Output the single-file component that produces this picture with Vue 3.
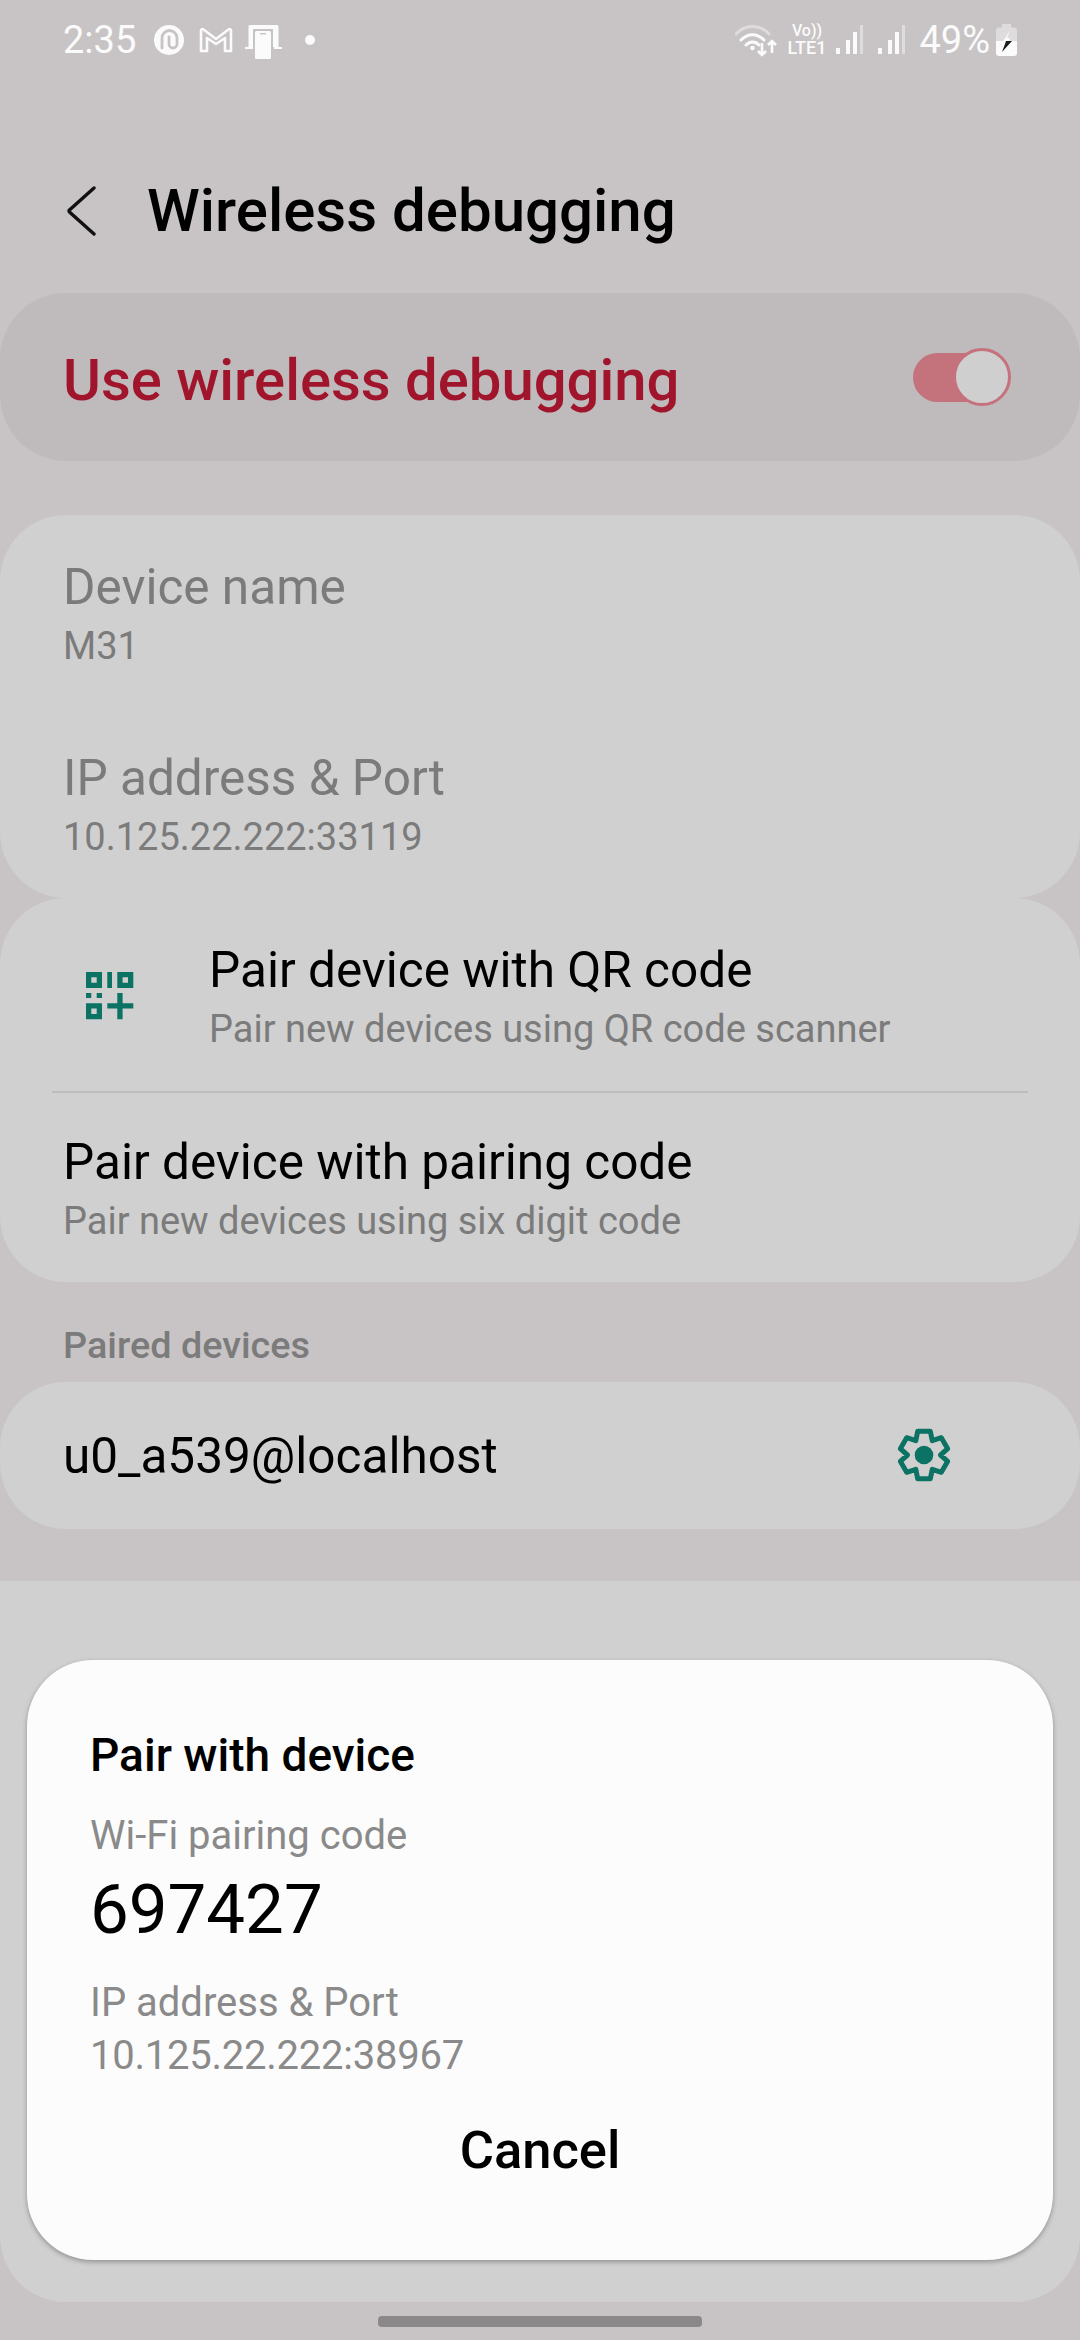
<script setup>
// gear outline, six teeth
const gearPath = () => {
  const cx = 30, cy = 30
  const pts = []
  for (let k = 0; k < 6; k++) {
    const a = (-90 + 60 * k) * Math.PI / 180
    const d = 15 * Math.PI / 180
    const v = 30 * Math.PI / 180
    pts.push([cx + 24.5 * Math.cos(a - d), cy + 24.5 * Math.sin(a - d)])
    pts.push([cx + 24.5 * Math.cos(a + d), cy + 24.5 * Math.sin(a + d)])
    pts.push([cx + 16.5 * Math.cos(a + v), cy + 16.5 * Math.sin(a + v)])
  }
  return 'M' + pts.map(p => p[0].toFixed(1) + ' ' + p[1].toFixed(1)).join('L') + 'Z'
}
const gear = gearPath()
</script>

<template>
  <div class="screen">
    <div class="status">
      <div class="status-left">
        <span class="clock">2:35</span>
        <svg class="ic-ring" width="30" height="30" viewBox="0 0 30 30">
          <circle cx="15" cy="15" r="15" fill="#fbfbfb" />
          <path d="M8 23V13a7.500 7.500 0 0 1 15 0v6a4 4 0 0 1-8 0v-7" fill="none" stroke="#c8c4c5" stroke-width="2.800" stroke-linecap="round" />
        </svg>
        <svg class="ic-m" width="34" height="26" viewBox="0 0 34 26">
          <path d="M2 24V3.500a1.500 1.500 0 0 1 2.500-1L17 12 29.500 2.500a1.500 1.500 0 0 1 2.500 1V24h-6V11l-9 6-9-6v13Z" fill="none" stroke="#fbfbfb" stroke-width="2.600" stroke-linejoin="round" />
        </svg>
        <svg class="ic-dex" width="37" height="34" viewBox="0 0 37 34">
          <path d="M5 0H32a1.500 1.500 0 0 1 1.500 1.500V22h-30V1.500A1.500 1.500 0 0 1 5 0Z" fill="#fbfbfb" />
          <path d="M0 22h8v2H0ZM29 22h8v2H29Z" fill="#fbfbfb" />
          <rect x="8" y="4" width="20" height="30" fill="#c8c4c5" />
          <rect x="10" y="6" width="16" height="28" rx="1.500" fill="#fbfbfb" />
          <rect x="15" y="8" width="6" height="1.400" fill="#c8c4c5" />
        </svg>
        <span class="dot"></span>
      </div>
      <div class="status-right">
        <svg class="ic-wifi" width="43" height="34" viewBox="0 0 43 34">
          <path d="M1 11C10 1 25 1 34 11" fill="none" stroke="#dedcdc" stroke-width="3" stroke-linecap="round" />
          <path d="M6 17C13 10 22 10 29 17M11 22C15 18 20 18 24 22" fill="none" stroke="#fbfbfb" stroke-width="3" stroke-linecap="round" />
          <circle cx="17.500" cy="25" r="2.300" fill="#fbfbfb" />
          <path d="M27 20V32M23 28l4 4 4-4M37 30V18M33 22l4-4 4 4" fill="none" stroke="#fbfbfb" stroke-width="2.600" />
        </svg>
        <div class="volte">
          <span class="vo">Vo))</span>
          <span class="lte">LTE1</span>
        </div>
        <svg class="ic-sig" width="27" height="30" viewBox="0 0 27 30">
          <rect x="0" y="23" width="4" height="6" fill="#fbfbfb" />
          <rect x="10" y="15" width="4" height="14" fill="#fbfbfb" />
          <rect x="17" y="7" width="4" height="22" fill="#fbfbfb" />
          <rect x="24" y="0" width="3" height="29" fill="#dedcdc" />
        </svg>
        <svg class="ic-sig2" width="27" height="30" viewBox="0 0 27 30">
          <rect x="0" y="23" width="4" height="6" fill="#fbfbfb" />
          <rect x="10" y="15" width="4" height="14" fill="#fbfbfb" />
          <rect x="17" y="7" width="4" height="22" fill="#fbfbfb" />
          <rect x="24" y="0" width="3" height="29" fill="#dedcdc" />
        </svg>
        <span class="pct">49%</span>
        <svg class="ic-bat" width="21" height="32" viewBox="0 0 21 32">
          <path d="M6 0h9v3.500h3a3 3 0 0 1 3 3V17H0V6.500a3 3 0 0 1 3-3h3Z" fill="#dedcdc" />
          <path d="M0 17h21v12a3 3 0 0 1-3 3H3a3 3 0 0 1-3-3Z" fill="#fbfbfb" />
          <path d="M14 7 7 17h6l1-3h-3Z" fill="#fbfbfb" />
          <path d="M16 17 6 28l3-8 1-3Z" fill="#1c1c1c" />
        </svg>
      </div>
    </div>

    <div class="header">
      <svg class="back" width="32" height="50" viewBox="0 0 32 50">
        <path d="M29 2 4.500 24a1.500 1.500 0 0 0 0 2L29 48" fill="none" stroke="#111" stroke-width="3.400" stroke-linecap="round" />
      </svg>
      <span class="title">Wireless debugging</span>
    </div>

    <div class="master">
      <span class="master-label">Use wireless debugging</span>
      <div class="toggle">
        <span class="thumb"></span>
      </div>
    </div>

    <div class="card info">
      <div class="row">
        <div class="row-title muted">Device name</div>
        <div class="row-sub">M31</div>
      </div>
      <div class="row">
        <div class="row-title muted">IP address &amp; Port</div>
        <div class="row-sub">10.125.22.222:33119</div>
      </div>
    </div>

    <div class="card pair">
      <div class="row qr-row">
        <svg class="qr" width="48" height="48" viewBox="0 0 48 48">
          <path fill="#0b7264" fill-rule="evenodd" d="M0 0h16v16H0ZM5.300 5.300v5.400h5.400V5.300ZM21.300 0H26v16h-4.700ZM31.300 0h16v16h-16ZM36.600 5.300v5.400H42V5.300ZM0 21h5.300v5H0ZM10.700 21H16v5h-5.300ZM0 31.300h16v16H0ZM5.300 36.600V42h5.400v-5.400ZM31.300 21h5.300v10.300h10.700v5.300H36.600v10.700h-5.300V36.600h-10v-5.300h10Z" />
        </svg>
        <div>
          <div class="row-title">Pair device with QR code</div>
          <div class="row-sub">Pair new devices using QR code scanner</div>
        </div>
      </div>
      <div class="divider"></div>
      <div class="row">
        <div class="row-title">Pair device with pairing code</div>
        <div class="row-sub">Pair new devices using six digit code</div>
      </div>
    </div>

    <div class="group-label">Paired devices</div>

    <div class="card device">
      <span class="row-title">u0_a539@localhost</span>
      <svg class="gear" width="60" height="60" viewBox="0 0 60 60">
        <path :d="gear" fill="none" stroke="#0b7264" stroke-width="5" stroke-linejoin="round" />
        <circle cx="30" cy="30" r="9.300" fill="#0b7264" />
      </svg>
    </div>

    <div class="sheet">
      <div class="dialog">
        <div class="dialog-title">Pair with device</div>
        <div class="dialog-label code-label">Wi-Fi pairing code</div>
        <div class="code">697427</div>
        <div class="dialog-label ip-label">IP address &amp; Port</div>
        <div class="dialog-label ip-value">10.125.22.222:38967</div>
        <div class="cancel">Cancel</div>
      </div>
    </div>

    <div class="home-bar"></div>
  </div>
</template>

<style scoped>
.screen {
  width: 1080px;
  height: 2340px;
  background: #c8c4c5;
  font-family: Roboto, sans-serif;
  overflow: hidden;
}

.status {
  height: 80px;
  padding: 0 63px;
  display: flex;
  justify-content: space-between;
  align-items: center;
  color: #fbfbfb;
}

.status-left,
.status-right {
  display: flex;
  align-items: center;
}

.clock,
.pct {
  font-size: 38px;
}

.ic-ring {
  margin-left: 18px;
}

.ic-m {
  margin-left: 15px;
}

.ic-dex {
  margin-left: 12px;
  margin-top: 3px;
}

.dot {
  width: 10px;
  height: 10px;
  border-radius: 50%;
  background: #fbfbfb;
  margin-left: 23px;
}

.volte {
  display: flex;
  flex-direction: column;
  align-items: center;
  margin-left: 10px;
  line-height: 1;
}

.vo {
  font-size: 16px;
  font-weight: 500;
}

.lte {
  font-size: 18px;
  font-weight: 500;
}

.ic-sig {
  margin-left: 10px;
}

.ic-sig2 {
  margin-left: 15px;
}

.pct {
  margin-left: 14px;
}

.ic-bat {
  margin-left: 6px;
}

.header {
  height: 213px;
  box-sizing: border-box;
  padding: 48px 0 0 65px;
  display: flex;
  align-items: center;
}

.back {
  margin-right: 50px;
}

.title {
  font-size: 60px;
  font-weight: 500;
  color: #000;
}

.master {
  height: 168px;
  border-radius: 66px;
  background: #bfbbbc;
  padding: 0 74px 0 63px;
  display: flex;
  justify-content: space-between;
  align-items: center;
}

.master-label {
  font-size: 58px;
  font-weight: 500;
  color: #a0152b;
  margin-top: 5px;
}

.toggle {
  position: relative;
  width: 93px;
  height: 49px;
  border-radius: 25px;
  background: #c4737c;
}

.thumb {
  position: absolute;
  top: -4.5px;
  right: -5px;
  width: 52px;
  height: 52px;
  border-radius: 50%;
  border: 3px solid #c5727c;
  background: #cfcfcf;
}

.card {
  background: #d0d0d0;
  border-radius: 66px;
}

.info {
  margin-top: 54px;
  padding: 43px 63px 0;
  height: 383px;
  box-sizing: border-box;
}

.row + .row {
  margin-top: 81px;
}

.row-title {
  font-size: 49.500px;
  color: #000;
}

.muted {
  color: #7b7b7b;
}

.row-sub {
  font-size: 38px;
  color: #7b7b7b;
  margin-top: 8px;
}

.pair {
  height: 384px;
  box-sizing: border-box;
  padding-top: 43px;
}

.pair .row {
  padding: 0 63px;
}

.qr-row {
  display: flex;
  align-items: center;
  gap: 75px;
  padding-left: 86px !important;
}

.divider {
  height: 2px;
  margin: 40px 52px 40px;
  background: #bdbdbd;
}

.pair .row + .divider + .row {
  margin-top: 0;
}

.group-label {
  height: 100px;
  box-sizing: border-box;
  padding: 41px 0 0 63px;
  font-size: 37.800px;
  font-weight: 500;
  color: #7b7b7b;
}

.device {
  height: 147px;
  padding: 0 126px 0 63px;
  display: flex;
  justify-content: space-between;
  align-items: center;
}

.gear {
  margin-top: -2px;
}

.sheet {
  margin-top: 52px;
  height: 721px;
  box-sizing: border-box;
  padding: 79px 27px 0;
  background: #d0d0d0;
  border-radius: 0 0 66px 66px;
}

.dialog {
  height: 600px;
  box-sizing: border-box;
  padding: 68px 63px 0;
  background: #fcfcfc;
  border-radius: 66px;
  box-shadow: 0 2px 5px rgba(0, 0, 0, 0.3);
}

.dialog-title {
  font-size: 46px;
  font-weight: 500;
  color: #000;
}

.dialog-label {
  font-size: 40px;
  color: #8a8a8a;
  margin-top: 6px;
}

.ip-value {
  letter-spacing: -0.24px;
}

.code-label {
  margin-top: 30px;
}

.code {
  font-size: 69px;
  color: #000;
  margin-top: 10px;
}

.ip-label {
  margin-top: 29px;
}

.cancel {
  margin-top: 40px;
  text-align: center;
  font-size: 52.500px;
  font-weight: 500;
  color: #000;
}

.home-bar {
  width: 324px;
  height: 11px;
  margin: 14px auto 0;
  border-radius: 4px;
  background: #8a8889;
}
</style>
